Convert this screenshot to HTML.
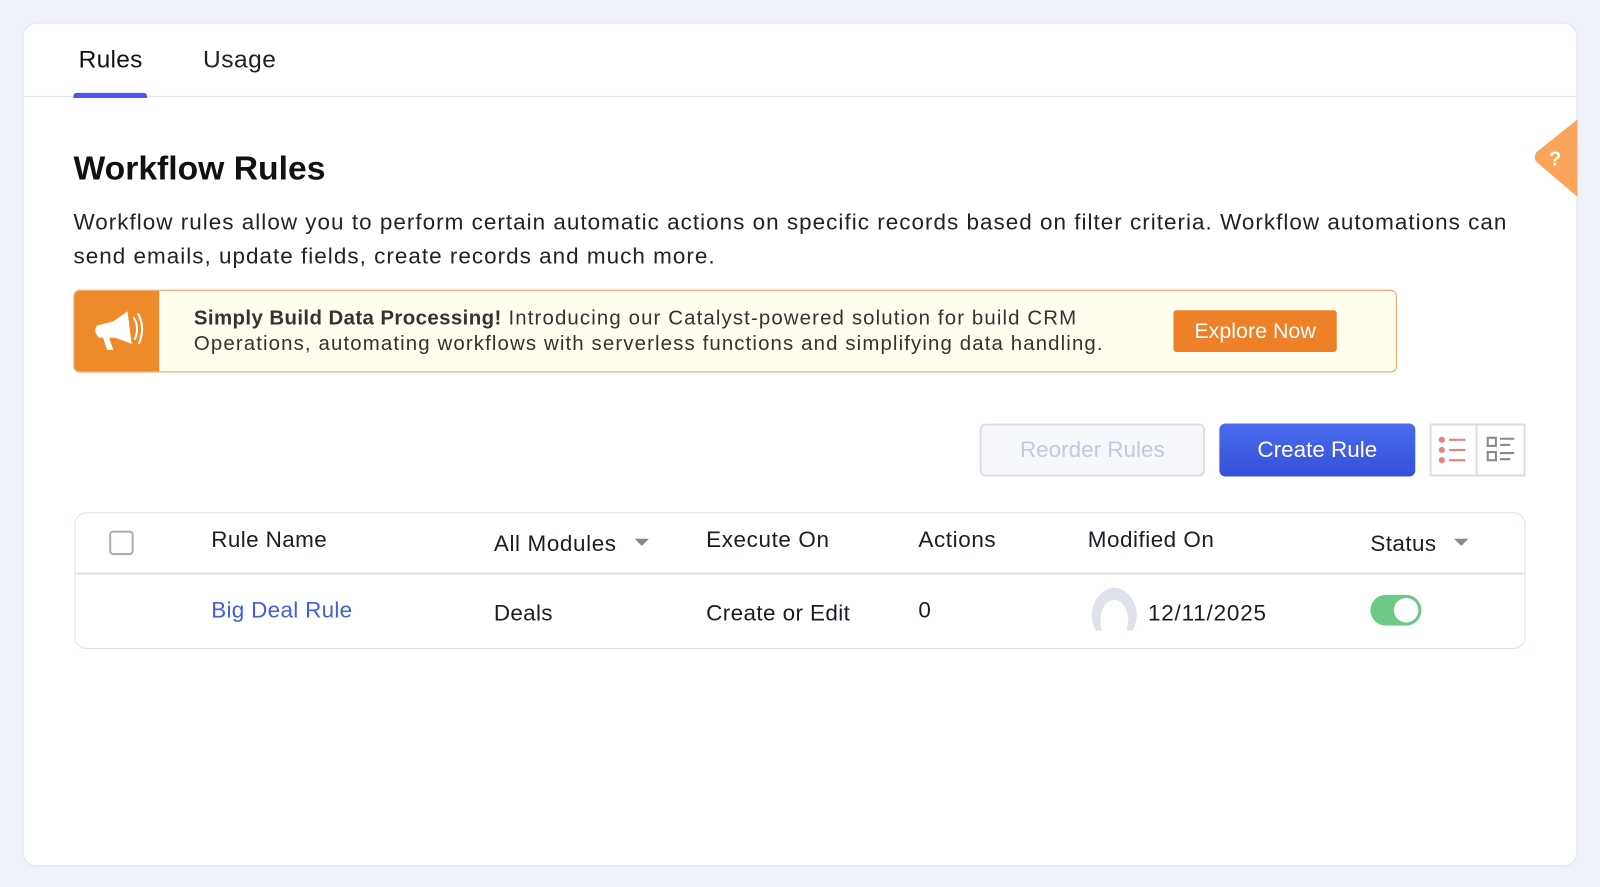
<!DOCTYPE html>
<html><head><meta charset="utf-8"><style>
*{box-sizing:border-box;margin:0;padding:0}
html,body{width:1600px;height:887px;overflow:hidden;background:#eef1fa;font-family:"Liberation Sans",sans-serif;color:#1c1c24}
#w{position:absolute;left:0;top:0;width:1568px;height:869px;transform:scale(1.0204);transform-origin:0 0}
.a{position:absolute;white-space:nowrap}
.card{position:absolute;left:22px;top:22px;width:1524px;height:827px;background:#fff;border:1px solid #dde1ee;border-radius:14px}
</style></head><body><div id="w">
<div class="card"></div>
<div class="a" style="left:22px;top:94px;width:1524px;height:1px;background:#dfe1ee"></div>
<div class="a" style="left:77px;top:45px;font-size:24px;color:#111;letter-spacing:0.3px">Rules</div>
<div class="a" style="left:199px;top:45px;font-size:24px;color:#222;letter-spacing:0.5px">Usage</div>
<div class="a" style="left:72px;top:91px;width:72px;height:5px;background:#4a5ae8;border-radius:3px 3px 0 0"></div>
<svg class="a" style="left:1502px;top:117px" width="44" height="76" viewBox="0 0 44 76"><path d="M44 0 L4 32 Q0 37 4 42 L44 76 Z" fill="#fba55a"/><text x="22" y="45" font-family="Liberation Sans" font-weight="bold" font-size="20" fill="#fff" text-anchor="middle">?</text></svg>
<div class="a" style="left:72px;top:146px;font-size:33px;font-weight:bold;color:#111">Workflow Rules</div>
<div class="a" style="left:72px;top:201px;font-size:22px;line-height:33px;color:#222;letter-spacing:1px">Workflow rules allow you to perform certain automatic actions on specific records based on filter criteria. Workflow automations can<br>send emails, update fields, create records and much more.</div>
<div class="a" style="left:72px;top:284px;width:1297px;height:81px;border:1px solid #f2a064;border-radius:6px;background:#fffdee;overflow:hidden">
 <div class="a" style="left:0;top:0;width:83px;height:79px;background:#ee8a2a"></div>
 <svg class="a" style="left:16px;top:16px" width="52" height="48" viewBox="0 0 52 48"><path d="M6 18 L22 14 L36 4 L40 36 L24 30 L8 30 Q2 24 6 18Z" fill="#fff"/><path d="M12 30 L18 30 L22 42 L16 42 Z" fill="#fff"/><path d="M42 10 Q48 20 43 32" stroke="#fff" stroke-width="2" fill="none"/><path d="M46 6 Q54 20 47 36" stroke="#fff" stroke-width="2" fill="none"/></svg>
 <div class="a" style="left:117px;top:15px;font-size:20px;line-height:25px;color:#333;letter-spacing:1.1px"><b style="letter-spacing:0.4px">Simply Build Data Processing!</b> Introducing our Catalyst-powered solution for build CRM<br>Operations, automating workflows with serverless functions and simplifying data handling.</div>
 <div class="a" style="left:1077px;top:19px;width:160px;height:41px;background:#ee8128;border-radius:3px;color:#fff;font-size:21px;line-height:41px;text-align:center">Explore Now</div>
</div>
<div class="a" style="left:960px;top:415px;width:221px;height:52px;border:2px solid #dcdfea;background:#f6f7fb;border-radius:6px;color:#c3c8de;font-size:22px;line-height:48px;text-align:center">Reorder Rules</div>
<div class="a" style="left:1195px;top:415px;width:192px;height:52px;background:linear-gradient(#4a6cf0,#3450d6);border-radius:6px;color:#fff;font-size:22px;line-height:52px;text-align:center">Create Rule</div>
<div class="a" style="left:1401px;top:415px;width:94px;height:52px;border:2px solid #dcdfea"></div>
<div class="a" style="left:1446px;top:415px;width:2px;height:52px;background:#dcdfea"></div>
<svg class="a" style="left:1408px;top:425px" width="32" height="32" viewBox="0 0 32 32"><g fill="#f07d82"><circle cx="5" cy="6" r="3"/><circle cx="5" cy="16" r="3"/><circle cx="5" cy="26" r="3"/></g><g stroke="#f07d82" stroke-width="2"><path d="M12 6h16M12 16h16M12 26h16"/></g></svg>
<svg class="a" style="left:1455px;top:425px" width="32" height="32" viewBox="0 0 32 32"><g fill="none" stroke="#888" stroke-width="2"><rect x="3" y="4" width="8" height="8"/><rect x="3" y="18" width="8" height="8"/><path d="M15 5h14M15 11h10M15 19h14M15 25h10"/></g></svg>
<div class="a" style="left:73px;top:502px;width:1422px;height:134px;border:1px solid #dde1ec;border-radius:12px"></div>
<div class="a" style="left:74px;top:561px;width:1420px;height:2px;background:#dde2ee"></div>
<div class="a" style="left:107px;top:520px;width:24px;height:24px;border:2px solid #a9acb8;border-radius:4px"></div>
<div class="a" style="left:207px;top:516px;font-size:22px;letter-spacing:0.4px">Rule Name</div>
<div class="a" style="left:484px;top:520px;font-size:22px;letter-spacing:0.6px">All Modules</div>
<div class="a" style="left:622px;top:528px;border:7px solid transparent;border-top:7px solid #888"></div>
<div class="a" style="left:692px;top:516px;font-size:22px;letter-spacing:0.6px">Execute On</div>
<div class="a" style="left:900px;top:516px;font-size:22px;letter-spacing:0.6px">Actions</div>
<div class="a" style="left:1066px;top:516px;font-size:22px;letter-spacing:0.5px">Modified On</div>
<div class="a" style="left:1343px;top:520px;font-size:22px;letter-spacing:0.4px">Status</div>
<div class="a" style="left:1425px;top:528px;border:7px solid transparent;border-top:7px solid #888"></div>
<div class="a" style="left:207px;top:585px;font-size:22px;color:#3f5fe0;letter-spacing:0.3px">Big Deal Rule</div>
<div class="a" style="left:484px;top:588px;font-size:22px;letter-spacing:0.3px">Deals</div>
<div class="a" style="left:692px;top:588px;font-size:22px;letter-spacing:0.4px">Create or Edit</div>
<div class="a" style="left:900px;top:585px;font-size:22px">0</div>
<svg class="a" style="left:1066px;top:576px" width="52" height="46" viewBox="0 0 52 46"><path d="M8 42 Q0 26 8 12 Q16 0 26 0 Q36 0 44 12 Q52 26 44 42 L38 42 Q42 28 36 18 Q32 12 26 12 Q20 12 16 18 Q10 28 14 42 Z" fill="#dfe2ea"/></svg>
<div class="a" style="left:1125px;top:588px;font-size:22px;letter-spacing:0.8px">12/11/2025</div>
<div class="a" style="left:1343px;top:583px;width:50px;height:30px;background:#6cc985;border-radius:15px"></div>
<div class="a" style="left:1366px;top:586px;width:24px;height:24px;background:#fff;border-radius:50%"></div>
</div></body></html>
